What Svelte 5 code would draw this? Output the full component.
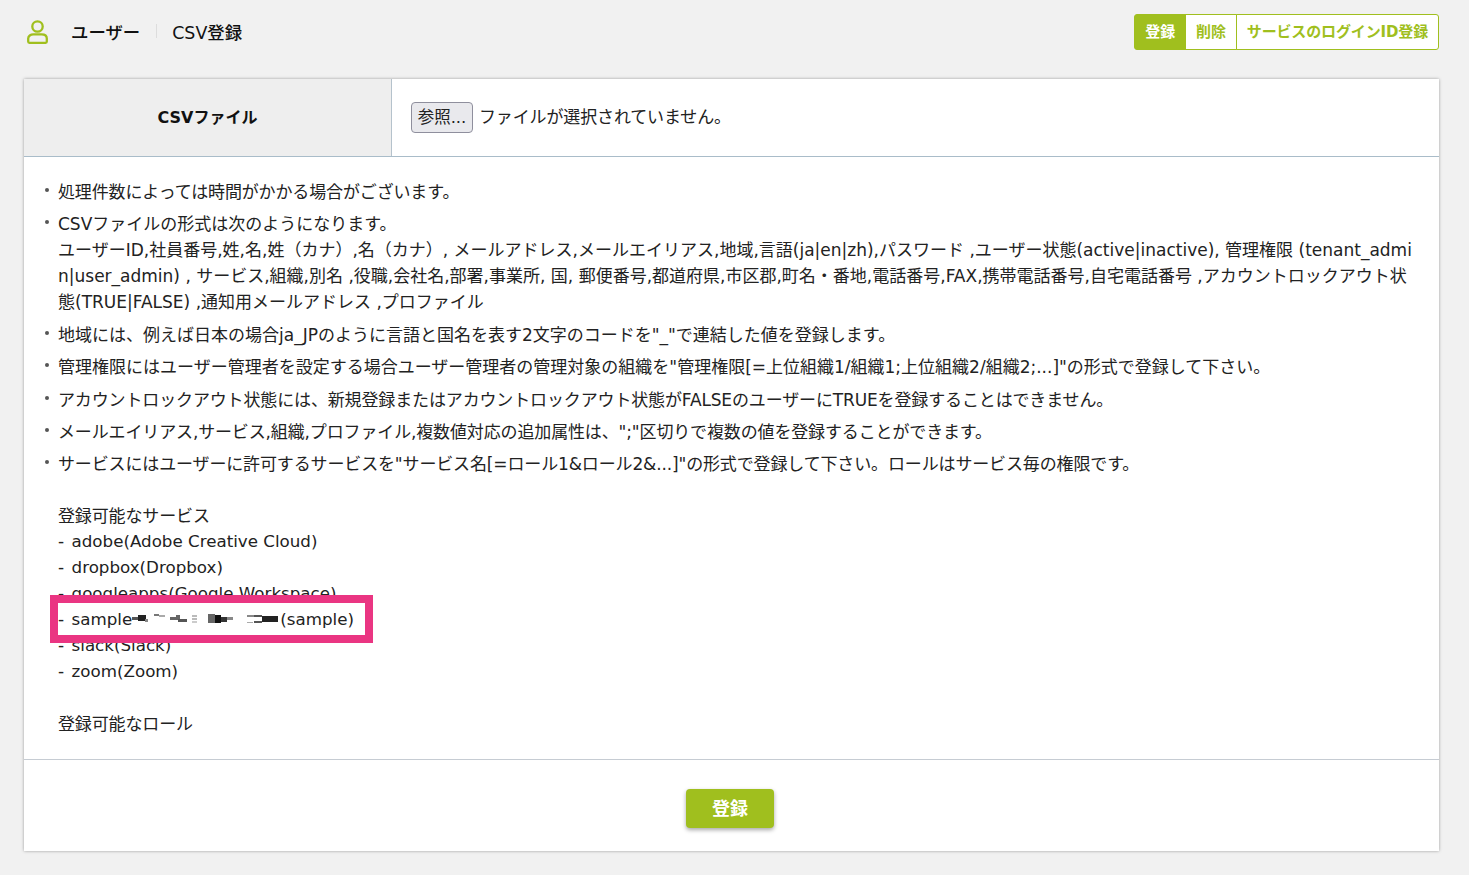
<script lang="ts">
  const services = [
    'adobe(Adobe Creative Cloud)',
    'dropbox(Dropbox)',
    'googleapps(Google Workspace)',
  ]
  const afterSample = ['slack(Slack)', 'zoom(Zoom)']
  // the blurred part of the service name, as it looks in the capture
  const blots = [
    [0, 5, 6, 3, '#555'], [6, 3, 8, 6, '#222'], [13, 7, 3, 3, '#888'],
    [22, 2, 5, 2, '#777'], [27, 3, 6, 2, '#aaa'],
    [38, 5, 6, 3, '#666'], [44, 3, 4, 5, '#666'], [46, 7, 9, 3, '#555'],
    [60, 3, 5, 2, '#bbb'], [60, 6, 5, 2, '#bbb'], [60, 9, 5, 2, '#ccc'],
    [76, 2, 7, 9, '#666'], [83, 3, 6, 8, '#111'], [89, 5, 6, 5, '#333'], [95, 5, 6, 3, '#888'],
    [115, 3, 7, 2, '#888'], [115, 10, 6, 1, '#aaa'], [122, 3, 8, 2, '#555'],
    [122, 9, 8, 2, '#555'], [130, 4, 16, 6, '#222'],
  ]
</script>

<div class="page">
  <header class="head">
    <div class="crumbs">
      <svg class="user" viewBox="0 0 21 24" aria-hidden="true">
        <circle cx="10.5" cy="6.5" r="5.2" fill="none" stroke="#a0bf1e" stroke-width="2.3" />
        <path d="M1.2 21.6 V18.6 C1.2 15.8 3.6 14.4 6.4 14.4 H14.6 C17.4 14.4 19.8 15.8 19.8 18.6 V21.6 C19.8 22.3 19.3 22.8 18.6 22.8 H2.4 C1.7 22.8 1.2 22.3 1.2 21.6 Z" fill="none" stroke="#a0bf1e" stroke-width="2.3" stroke-linejoin="round" />
      </svg>
      <span class="crumb">ユーザー</span>
      <span class="sep"></span>
      <span class="crumb">CSV登録</span>
    </div>
    <div class="tabs">
      <button class="tab on">登録</button>
      <button class="tab">削除</button>
      <button class="tab">サービスのログインID登録</button>
    </div>
  </header>

  <main class="card">
    <div class="file-row">
      <div class="file-label">CSVファイル</div>
      <div class="file-cell">
        <button class="browse">参照...</button>
        <span class="tight">ファイルが選択されていません。</span>
      </div>
    </div>

    <div class="notes">
      <ul>
        <li class="tight">処理件数によっては時間がかかる場合がございます。</li>
        <li>CSVファイルの形式は次のようになります。<br />ユーザーID,社員番号,姓,名,姓（カナ）,名（カナ）, メールアドレス,メールエイリアス,地域,言語(ja|en|zh),パスワード ,ユーザー状態(active|inactive), 管理権限 (tenant_admi<br />n|user_admin) , サービス,組織,別名 ,役職,会社名,部署,事業所, 国, 郵便番号,都道府県,市区郡,町名・番地,電話番号,FAX,携帯電話番号,自宅電話番号 ,アカウントロックアウト状<br />態(TRUE|FALSE) ,通知用メールアドレス ,プロファイル</li>
        <li>地域には、例えば日本の場合ja_JPのように言語と国名を表す2文字のコードを"_"で連結した値を登録します。</li>
        <li>管理権限にはユーザー管理者を設定する場合ユーザー管理者の管理対象の組織を"管理権限[=上位組織1/組織1;上位組織2/組織2;...]"の形式で登録して下さい。</li>
        <li class="tight">アカウントロックアウト状態には、新規登録またはアカウントロックアウト状態がFALSEのユーザーにTRUEを登録することはできません。</li>
        <li class="tight">メールエイリアス,サービス,組織,プロファイル,複数値対応の追加属性は、";"区切りで複数の値を登録することができます。</li>
        <li class="tight">サービスにはユーザーに許可するサービスを"サービス名[=ロール1&amp;ロール2&amp;...]"の形式で登録して下さい。ロールはサービス毎の権限です。</li>
      </ul>

      <div class="plain">
        <p class="tight">登録可能なサービス</p>
        {#each services as s}
          <p class="svc-line"><span class="dash">-</span> <span class="svc">{s}</span></p>
        {/each}
        <p class="marked">
          <span class="dash">-</span> <span class="svc">sample</span><svg class="blur" viewBox="0 0 148 14" aria-hidden="true">
            {#each blots as [x, y, w, h, fill]}
              <rect {x} {y} width={w} height={h} {fill} />
            {/each}
          </svg><span class="svc">(sample)</span>
        </p>
        {#each afterSample as s}
          <p class="svc-line"><span class="dash">-</span> <span class="svc">{s}</span></p>
        {/each}
        <p class="gap tight">登録可能なロール</p>
      </div>
    </div>

    <footer class="foot">
      <button class="submit">登録</button>
    </footer>
  </main>
</div>

<style>
  :global(body) {
    margin: 0;
    background: #f1f1f1;
    color: #222;
    font-family: 'DejaVu Sans', 'Noto Sans CJK JP', sans-serif;
    font-size: 17px;
  }
  .page {
    height: 875px;
    padding: 0 30px 0 23px;
    box-sizing: border-box;
    overflow: hidden;
  }
  .head {
    height: 79px;
    display: flex;
    align-items: flex-start;
    justify-content: space-between;
  }
  .crumbs {
    display: flex;
    align-items: center;
    height: 62px;
    color: #111;
  }
  .user {
    width: 21px;
    height: 24px;
    margin: 2px 0 0 4px;
  }
  .crumb {
    font-size: 17.4px;
    font-weight: 500;
  }
  .crumbs .crumb:nth-of-type(1) {
    margin-left: 23px;
  }
  .sep {
    width: 1px;
    height: 14px;
    margin: 0 15px 0 16px;
    background: #ddd;
  }
  .tabs {
    display: flex;
    margin-top: 14px;
  }
  .tab {
    height: 36px;
    padding: 0 10px 3px;
    margin-left: -1px;
    border: 1px solid #a0bf1e;
    border-radius: 0;
    background: #fff;
    color: #a0bf1e;
    font: bold 15px 'DejaVu Sans', 'Noto Sans CJK JP', sans-serif;
    letter-spacing: -0.14px;
  }
  .tab.on {
    background: #a0bf1e;
    color: #fff;
    border-radius: 3px 0 0 3px;
  }
  .tab:last-child {
    border-radius: 0 3px 3px 0;
  }
  .card {
    height: 772px;
    display: flex;
    flex-direction: column;
    background: #fff;
    box-shadow: 0 0 3px rgba(0, 0, 0, 0.35);
    margin-left: 1px;
    width: 1415px;
  }
  .file-row {
    display: flex;
    height: 78px;
    flex: none;
    box-sizing: border-box;
    border-bottom: 1px solid #a9bcc9;
  }
  .file-label {
    width: 368px;
    display: flex;
    align-items: center;
    justify-content: center;
    background: #eee;
    border-right: 1px solid #b5c2cc;
    font-weight: bold;
    font-size: 16px;
    color: #111;
    padding-bottom: 4px;
    box-sizing: border-box;
  }
  .file-cell {
    display: flex;
    align-items: center;
    gap: 6px;
    padding: 0 0 5px 19px;
  }
  .tight {
    letter-spacing: -0.14px;
  }
  .browse {
    width: 62px;
    height: 31px;
    margin-top: 5px;
    padding: 0 0 4px;
    border: 1px solid #8f8f9d;
    border-radius: 4px;
    background: #e9e9ed;
    color: #222;
    font: 16.5px 'DejaVu Sans', 'Noto Sans CJK JP', sans-serif;
  }
  .notes {
    flex: 1;
    padding: 22px 20px 0 34px;
    line-height: 26px;
    position: relative;
    border-bottom: 1px solid #c6ccd3;
  }
  ul {
    list-style: none;
    margin: 0;
    padding: 0;
  }
  li {
    position: relative;
    margin-bottom: 6.4px;
    white-space: nowrap;
  }
  li::before {
    content: '';
    position: absolute;
    left: -13px;
    top: 9px;
    width: 4px;
    height: 4px;
    border-radius: 50%;
    background: #555;
  }
  .plain {
    margin-top: 26px;
  }
  .plain p {
    margin: 0;
    height: 26px;
  }
  .plain .gap {
    margin-top: 26px;
  }
  .svc-line {
    line-height: 24px;
  }
  .dash {
    margin-right: 2px;
  }
  .svc {
    font-size: 16.7px;
  }
  .marked {
    position: relative;
    z-index: 1;
    background: #fff;
    outline: 8px solid #ea3582;
    width: 307px;
    height: 32px !important;
    margin: -4px 0 -2px 0 !important;
    padding: 3px 0;
    box-sizing: border-box;
    line-height: 26px;
  }
  .blur {
    width: 148px;
    height: 14px;
    vertical-align: -1px;
  }
  .foot {
    height: 91px;
    flex: none;
    display: flex;
    align-items: center;
    justify-content: center;
    padding-right: 3px;
  }
  .submit {
    width: 88px;
    height: 39px;
    margin-top: 5px;
    padding-bottom: 3px;
    border: none;
    border-radius: 4px;
    background: #a0bf1e;
    color: #fff;
    font: bold 18px 'DejaVu Sans', 'Noto Sans CJK JP', sans-serif;
    box-shadow: 0 2px 4px rgba(0, 0, 0, 0.35);
  }
</style>
